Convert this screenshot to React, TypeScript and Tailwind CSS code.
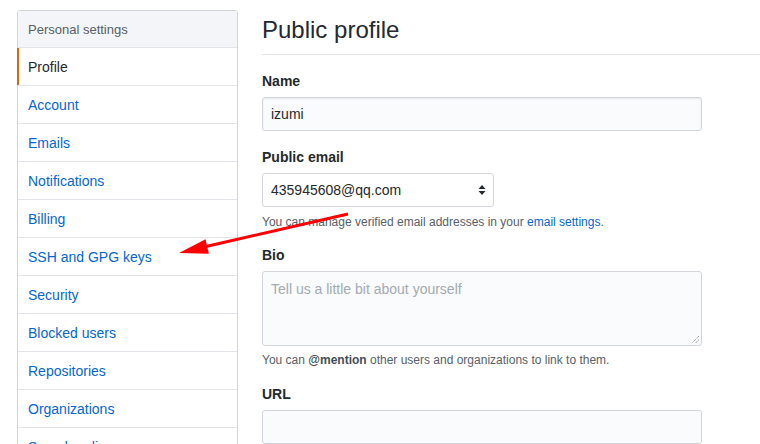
import React from "react";

const menu = [
  "Profile",
  "Account",
  "Emails",
  "Notifications",
  "Billing",
  "SSH and GPG keys",
  "Security",
  "Blocked users",
  "Repositories",
  "Organizations",
  "Saved replies",
  "Applications",
];

function Label({ children, className = "" }: { children: React.ReactNode; className?: string }) {
  return <div className={`text-[14px] leading-[20px] font-bold text-[#24292e] ${className}`}>{children}</div>;
}

export default function App() {
  return (
    <div
      className="relative h-[444px] w-[760px] overflow-hidden bg-white text-[#24292e]"
      style={{ fontFamily: '"Liberation Sans", Arial, sans-serif' }}
    >
      <div className="flex">
        {/* sidebar */}
        <nav className="ml-[17px] mt-[10px] w-[221px] shrink-0 self-start border border-[#d1d5da] rounded-t-[3px]">
          <div className="flex h-[37px] items-center border-b border-[#e1e4e8] bg-[#f3f5f8] pl-[10px] pt-[2px] text-[13px] text-[#586069]">
            Personal settings
          </div>
          {menu.map((item, i) => (
            <div
              key={item}
              className={`relative flex h-[38px] items-center border-b border-[#e1e4e8] pl-[10px] pt-[2px] text-[14px] ${
                i === 0 ? "text-[#24292e]" : "text-[#0366d6]"
              }`}
            >
              {i === 0 && <span className="absolute left-[-1px] top-0 bottom-0 w-[2px] bg-[#e36209]" />}
              {item}
            </div>
          ))}
        </nav>

        {/* main */}
        <main className="ml-[24px] flex-1">
          <div className="border-b border-[#e1e4e8] pt-[12px] pb-[6px] text-[24px] leading-[36px] font-normal">
            Public profile
          </div>

          <Label className="mt-[16px]">Name</Label>
          <div className="mt-[6px] flex h-[34px] w-[440px] items-center rounded-[3px] border border-[#d1d5da] bg-[#fafbfc] px-[8px] text-[14px] shadow-[inset_0_1px_2px_rgba(27,31,35,0.075)]">
            izumi
          </div>

          <Label className="mt-[16px]">Public email</Label>
          <div className="mt-[6px] flex h-[34px] w-[232px] items-center justify-between rounded-[3px] border border-[#d1d5da] bg-white pl-[8px] pr-[7px] text-[14px]">
            <span>435945608@qq.com</span>
            <svg width="8" height="12" viewBox="0 0 8 12">
              <path d="M4 1 L7.5 5 H0.5 Z" fill="#24292e" />
              <path d="M4 11 L7.5 7 H0.5 Z" fill="#24292e" />
            </svg>
          </div>
          <p className="mt-[6px] text-[12px] leading-[18px] text-[#586069]">
            You can manage verified email addresses in your{" "}
            <span className="text-[#0366d6]">email settings</span>.
          </p>

          <Label className="mt-[14px]">Bio</Label>
          <div className="relative mt-[6px] h-[75px] w-[440px] rounded-[3px] border border-[#d1d5da] bg-[#fafbfc] px-[8px] py-[7px] text-[14px] leading-[20px] text-[#a3aab1]">
            Tell us a little bit about yourself
            <svg className="absolute bottom-[1px] right-[1px]" width="9" height="9" viewBox="0 0 9 9">
              <path d="M8 1 L1 8 M8 4.5 L4.5 8" stroke="#777" strokeWidth="1" strokeDasharray="1 1" />
            </svg>
          </div>
          <p className="mt-[5px] text-[12px] leading-[18px] text-[#586069]">
            You can <span className="font-bold text-[#444d56]">@mention</span> other users and organizations to link to them.
          </p>

          <Label className="mt-[15px]">URL</Label>
          <div className="mt-[6px] h-[34px] w-[440px] rounded-[3px] border border-[#d1d5da] bg-[#fafbfc]" />
        </main>
      </div>

      {/* red annotation arrow */}
      <svg className="pointer-events-none absolute left-0 top-0" width="760" height="444">
        <line x1="348" y1="214" x2="206" y2="246.5" stroke="#ff0000" strokeWidth="3" />
        <polygon points="179,253 205.5,239.2 208.9,253.8" fill="#ff0000" />
      </svg>
    </div>
  );
}
